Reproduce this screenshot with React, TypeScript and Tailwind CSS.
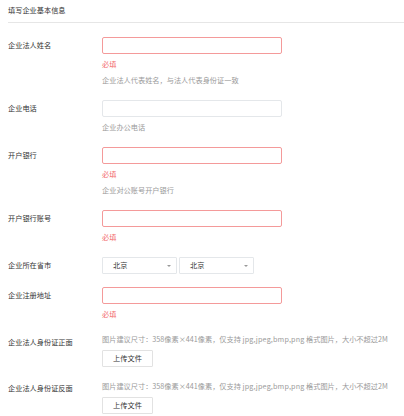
import React from "react";

const font = { fontFamily: '"Noto Sans CJK SC", "Noto Sans", sans-serif' };

function Label({ children }: { children: React.ReactNode }) {
  return (
    <div className="w-[94px] shrink-0 h-[17px] flex items-center text-[#333]">{children}</div>
  );
}

function Input({ error }: { error?: boolean }) {
  return (
    <div
      className={
        "w-[180px] h-[17px] rounded-[2px] border bg-white " +
        (error ? "border-[#f49a9a]" : "border-[#e4e7ea]")
      }
    />
  );
}

function Req() {
  return <div className="h-[16px] leading-[16px] text-[#f26b6b]">必填</div>;
}

function Hint({ children }: { children: React.ReactNode }) {
  return <div className="h-[16px] leading-[16px] text-[#9a9a9a] whitespace-nowrap">{children}</div>;
}

function Select() {
  return (
    <div className="w-[75px] h-[17px] border border-[#e4e7ea] rounded-[1px] flex items-center justify-between pl-[10px] pr-[5px] text-[#333]">
      <span>北京</span>
      <span className="w-0 h-0 border-l-[2px] border-r-[2px] border-t-[2px] border-l-transparent border-r-transparent border-t-[#999]" />
    </div>
  );
}

function UploadBtn() {
  return (
    <div className="w-[51px] h-[17px] border border-[#e2e2e2] rounded-[1px] flex items-center justify-center text-[#333]">
      上传文件
    </div>
  );
}

export default function App() {
  return (
    <div className="w-[404px] h-[416px] bg-white overflow-hidden relative text-[7.2px]" style={font}>
      <div className="pl-[8px]">
        <div className="h-[23px] flex items-center border-b border-[#e6e6e6] text-[#333] pb-[1px]">
          填写企业基本信息
        </div>

        {/* Row 1 */}
        <div className="flex mt-[14px]">
          <Label>企业法人姓名</Label>
          <div className="flex flex-col">
            <Input error />
            <div className="mt-[2px]">
              <Req />
              <Hint>企业法人代表姓名，与法人代表身份证一致</Hint>
            </div>
          </div>
        </div>

        {/* Row 2 */}
        <div className="flex mt-[12px]">
          <Label>企业电话</Label>
          <div className="flex flex-col">
            <Input />
            <div className="mt-[2px]">
              <Hint>企业办公电话</Hint>
            </div>
          </div>
        </div>

        {/* Row 3 */}
        <div className="flex mt-[12px]">
          <Label>开户银行</Label>
          <div className="flex flex-col">
            <Input error />
            <div className="mt-[2px]">
              <Req />
              <Hint>企业对公账号开户银行</Hint>
            </div>
          </div>
        </div>

        {/* Row 4 */}
        <div className="flex mt-[12px]">
          <Label>开户银行账号</Label>
          <div className="flex flex-col">
            <Input error />
            <div className="mt-[2px]">
              <Req />
            </div>
          </div>
        </div>

        {/* Row 5 */}
        <div className="flex mt-[12px]">
          <Label>企业所在省市</Label>
          <div className="flex gap-[2px]">
            <Select />
            <Select />
          </div>
        </div>

        {/* Row 6 */}
        <div className="flex mt-[13px]">
          <Label>企业注册地址</Label>
          <div className="flex flex-col">
            <Input error />
            <div className="mt-[2px]">
              <Req />
            </div>
          </div>
        </div>

        {/* Row 7 */}
        <div className="flex mt-[9px]">
          <div className="w-[94px] shrink-0 pt-[3px] leading-[16px] text-[#333]">企业法人身份证正面</div>
          <div className="flex flex-col">
            <Hint>
              图片建议尺寸：358像素×441像素，仅支持 <span className="tracking-[0.15px]">jpg,jpeg,bmp,png</span> 格式图片，大小不超过2M
            </Hint>
            <div className="mt-[3px]">
              <UploadBtn />
            </div>
          </div>
        </div>

        {/* Row 8 */}
        <div className="flex mt-[11px]">
          <div className="w-[94px] shrink-0 pt-[2px] leading-[16px] text-[#333]">企业法人身份证反面</div>
          <div className="flex flex-col">
            <Hint>
              图片建议尺寸：358像素×441像素，仅支持 <span className="tracking-[0.15px]">jpg,jpeg,bmp,png</span> 格式图片，大小不超过2M
            </Hint>
            <div className="mt-[3px]">
              <UploadBtn />
            </div>
          </div>
        </div>
      </div>
    </div>
  );
}
